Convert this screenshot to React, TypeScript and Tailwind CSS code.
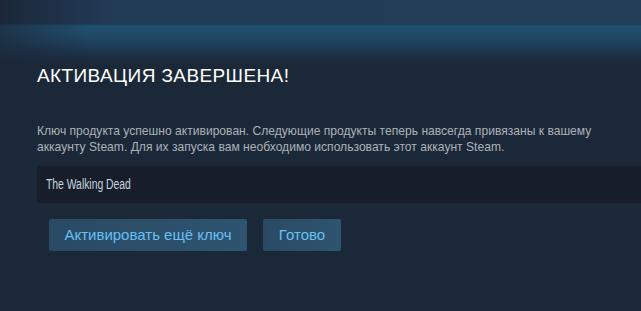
import React from "react";

const font = "font-['Liberation_Sans',Arial,sans-serif]";

function Button({ label, wide }: { label: string; wide?: boolean }) {
  return (
    <button
      className={`h-[32px] rounded-[2px] bg-[linear-gradient(to_right,#2a4a64,#2e5470)] text-[15px] text-[#66c0f4] ${
        wide ? "w-[198px]" : "w-[78px]"
      }`}
    >
      {label}
    </button>
  );
}

export default function App() {
  return (
    <div className={`w-[641px] h-[311px] overflow-hidden bg-[#1b2838] ${font}`}>
      <div className="h-[24px] bg-[linear-gradient(to_right,#1b2739,#223b57_18%,#233c58)]" />
      <div className="h-[287px] pt-[40px] pl-[37px] bg-[linear-gradient(to_right,rgba(27,40,56,0.7),rgba(27,40,56,0)_90px),linear-gradient(to_bottom,#1c3a5c_0px,#20506f_2px,#1f4865_14px,#1c2e44_32px,#1b2838_40px)]">
        <h1 className="text-[19px] leading-[24px] tracking-[0.4px] text-white">
          АКТИВАЦИЯ ЗАВЕРШЕНА!
        </h1>
        <p className="mt-[35px] w-[570px] text-[12.1px] leading-[16px] text-[#acb2b8]">
          Ключ продукта успешно активирован. Следующие продукты теперь навсегда
          привязаны к вашему аккаунту Steam. Для их запуска вам необходимо
          использовать этот аккаунт Steam.
        </p>
        <div className="mt-[11px] h-[37px] flex items-center pl-[9px] bg-[#171e2a] text-[14px] text-[#c6d4df]">
          <span className="inline-block origin-left scale-x-[0.74]">The Walking Dead</span>
        </div>
        <div className="mt-[16px] ml-[12px] flex gap-[16px]">
          <Button label="Активировать ещё ключ" wide />
          <Button label="Готово" />
        </div>
      </div>
    </div>
  );
}
